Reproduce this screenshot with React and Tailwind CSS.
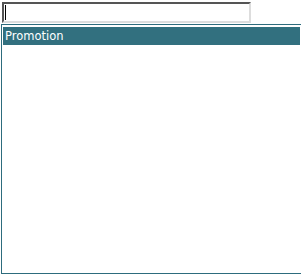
export default function App() {
  return (
    <div className="w-[301px] h-[275px] bg-white overflow-hidden" style={{ fontFamily: "'DejaVu Sans', Verdana, sans-serif" }}>
      <div className="pt-[2px] pl-[2px]">
        <div className="w-[249px] h-[21px] border-2 border-t-[#555] border-l-[#555] border-b-[#ddd] border-r-[#ddd] bg-white flex items-center pl-[1px]">
          <span className="block w-[1px] h-[15px] bg-black" />
        </div>
      </div>
      <div className="ml-[1px] mt-[1px] w-[302px] h-[250px] border border-[#2d6c7d] pt-[2px] pl-[1px] pr-[2px]">
        <div className="h-[18px] bg-[#32707f] text-white text-[11.5px] leading-[18px] pl-[2px]">
          Promotion
        </div>
      </div>
    </div>
  );
}
